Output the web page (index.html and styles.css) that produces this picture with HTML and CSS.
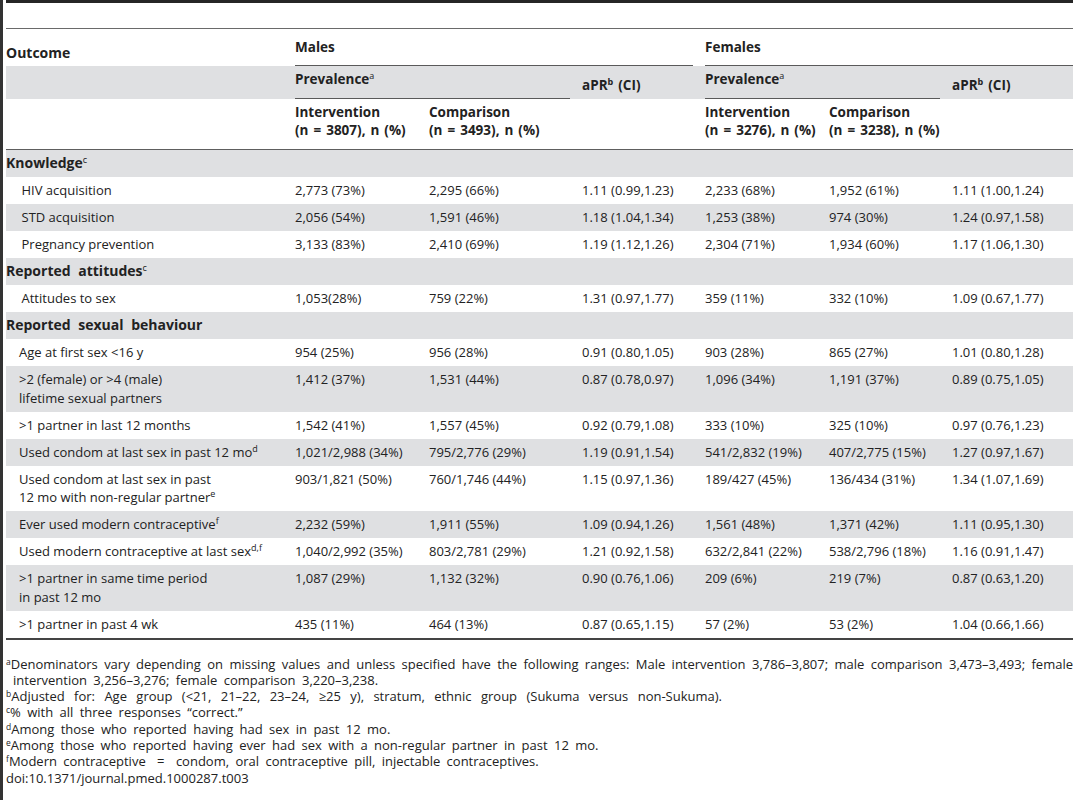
FILE: index.html
```html
<!DOCTYPE html>
<html lang="en">
  <head>
    <meta charset="UTF-8" />
    <meta name="viewport" content="width=device-width, initial-scale=1.0" />
    <title>Table 3</title>
    <link rel="stylesheet" href="styles.css">
  </head>

  <body>
    <div class="pagina">
      <div class="barra-topo"></div>

      <table class="tabela">
        <colgroup>
          <col class="c-outcome">
          <col class="c-int">
          <col class="c-comp">
          <col class="c-apr">
          <col class="c-int2">
          <col class="c-comp2">
          <col class="c-apr2">
        </colgroup>
        <thead>
          <tr class="linha-1">
            <th class="outcome">Outcome</th>
            <th colspan="3" class="traco">Males</th>
            <th colspan="3" class="traco-todo">Females</th>
          </tr>
          <tr class="linha-2 cinza">
            <th></th>
            <th colspan="2" class="traco">Prevalence<sup>a</sup></th>
            <th class="apr">aPR<sup class="alta">b</sup> (CI)</th>
            <th colspan="2" class="traco">Prevalence<sup>a</sup></th>
            <th class="apr">aPR<sup class="alta">b</sup> (CI)</th>
          </tr>
          <tr class="linha-3">
            <th></th>
            <th>Intervention<br>(n = 3807), n (%)</th>
            <th>Comparison<br>(n = 3493), n (%)</th>
            <th></th>
            <th>Intervention<br>(n = 3276), n (%)</th>
            <th>Comparison<br>(n = 3238), n (%)</th>
            <th></th>
          </tr>
        </thead>
        <tbody>
          <tr class="secao"><td colspan="7">Knowledge<sup>c</sup></td></tr>
          <tr>
            <td class="item largo">HIV acquisition</td>
            <td>2,773 (73%)</td><td>2,295 (66%)</td><td>1.11 (0.99,1.23)</td>
            <td>2,233 (68%)</td><td>1,952 (61%)</td><td>1.11 (1.00,1.24)</td>
          </tr>
          <tr>
            <td class="item largo">STD acquisition</td>
            <td>2,056 (54%)</td><td>1,591 (46%)</td><td>1.18 (1.04,1.34)</td>
            <td>1,253 (38%)</td><td>974 (30%)</td><td>1.24 (0.97,1.58)</td>
          </tr>
          <tr>
            <td class="item largo">Pregnancy prevention</td>
            <td>3,133 (83%)</td><td>2,410 (69%)</td><td>1.19 (1.12,1.26)</td>
            <td>2,304 (71%)</td><td>1,934 (60%)</td><td>1.17 (1.06,1.30)</td>
          </tr>
          <tr class="secao"><td colspan="7">Reported attitudes<sup>c</sup></td></tr>
          <tr>
            <td class="item largo">Attitudes to sex</td>
            <td>1,053(28%)</td><td>759 (22%)</td><td>1.31 (0.97,1.77)</td>
            <td>359 (11%)</td><td>332 (10%)</td><td>1.09 (0.67,1.77)</td>
          </tr>
          <tr class="secao"><td colspan="7">Reported sexual behaviour</td></tr>
          <tr>
            <td class="item">Age at first sex &lt;16 y</td>
            <td>954 (25%)</td><td>956 (28%)</td><td>0.91 (0.80,1.05)</td>
            <td>903 (28%)</td><td>865 (27%)</td><td>1.01 (0.80,1.28)</td>
          </tr>
          <tr>
            <td class="item">&gt;2 (female) or &gt;4 (male)<br>lifetime sexual partners</td>
            <td>1,412 (37%)</td><td>1,531 (44%)</td><td>0.87 (0.78,0.97)</td>
            <td>1,096 (34%)</td><td>1,191 (37%)</td><td>0.89 (0.75,1.05)</td>
          </tr>
          <tr>
            <td class="item">&gt;1 partner in last 12 months</td>
            <td>1,542 (41%)</td><td>1,557 (45%)</td><td>0.92 (0.79,1.08)</td>
            <td>333 (10%)</td><td>325 (10%)</td><td>0.97 (0.76,1.23)</td>
          </tr>
          <tr>
            <td class="item">Used condom at last sex in past 12 mo<sup>d</sup></td>
            <td>1,021/2,988 (34%)</td><td>795/2,776 (29%)</td><td>1.19 (0.91,1.54)</td>
            <td>541/2,832 (19%)</td><td>407/2,775 (15%)</td><td>1.27 (0.97,1.67)</td>
          </tr>
          <tr>
            <td class="item">Used condom at last sex in past<br>12 mo with non-regular partner<sup>e</sup></td>
            <td>903/1,821 (50%)</td><td>760/1,746 (44%)</td><td>1.15 (0.97,1.36)</td>
            <td>189/427 (45%)</td><td>136/434 (31%)</td><td>1.34 (1.07,1.69)</td>
          </tr>
          <tr>
            <td class="item">Ever used modern contraceptive<sup>f</sup></td>
            <td>2,232 (59%)</td><td>1,911 (55%)</td><td>1.09 (0.94,1.26)</td>
            <td>1,561 (48%)</td><td>1,371 (42%)</td><td>1.11 (0.95,1.30)</td>
          </tr>
          <tr>
            <td class="item">Used modern contraceptive at last sex<sup>d,f</sup></td>
            <td>1,040/2,992 (35%)</td><td>803/2,781 (29%)</td><td>1.21 (0.92,1.58)</td>
            <td>632/2,841 (22%)</td><td>538/2,796 (18%)</td><td>1.16 (0.91,1.47)</td>
          </tr>
          <tr>
            <td class="item">&gt;1 partner in same time period<br>in past 12 mo</td>
            <td>1,087 (29%)</td><td>1,132 (32%)</td><td>0.90 (0.76,1.06)</td>
            <td>209 (6%)</td><td>219 (7%)</td><td>0.87 (0.63,1.20)</td>
          </tr>
          <tr>
            <td class="item">&gt;1 partner in past 4 wk</td>
            <td>435 (11%)</td><td>464 (13%)</td><td>0.87 (0.65,1.15)</td>
            <td>57 (2%)</td><td>53 (2%)</td><td>1.04 (0.66,1.66)</td>
          </tr>
        </tbody>
      </table>

      <div class="notas">
        <p class="just"><sup>a</sup>Denominators vary depending on missing values and unless specified have the following ranges: Male intervention 3,786–3,807; male comparison 3,473–3,493; female intervention 3,256–3,276; female comparison 3,220–3,238.</p>
        <p class="largo"><sup>b</sup>Adjusted for: Age group (&lt;21, 21–22, 23–24, ≥25 y), stratum, ethnic group (Sukuma versus non-Sukuma).</p>
        <p><sup>c</sup>% with all three responses “correct.”</p>
        <p><sup>d</sup>Among those who reported having had sex in past 12 mo.</p>
        <p><sup>e</sup>Among those who reported having ever had sex with a non-regular partner in past 12 mo.</p>
        <p><sup>f</sup>Modern contraceptive <span class="igual">=</span> condom, oral contraceptive pill, injectable contraceptives.</p>
        <p>doi:10.1371/journal.pmed.1000287.t003</p>
      </div>
    </div>
  </body>
</html>
```

FILE: styles.css
```css
  body {
    margin: 0;
    background: #fff;
    color: #222;
    font-family: "Open Sans", "DejaVu Sans", sans-serif;
    font-size: 13px;
  }
  .pagina {
    min-height: 800px;
    border-left: 3px solid #333;
    padding-left: 3px;
  }
  .barra-topo {
    height: 3px;
    background: #262626;
    margin-bottom: 25px;
  }

  .tabela {
    width: 1067px;
    table-layout: fixed;
    border-collapse: separate;
    border-spacing: 0;
    border-top: 1px solid #6a6a6a;
    border-bottom: 2px solid #444;
    line-height: 18.5px;
  }
  .c-outcome { width: 289px; }
  .c-int { width: 134px; }
  .c-comp { width: 153px; }
  .c-apr { width: 123px; }
  .c-int2 { width: 124px; }
  .c-comp2 { width: 123px; }
  .c-apr2 { width: 121px; }

  th, td {
    padding: 0;
    text-align: left;
    vertical-align: top;
    white-space: nowrap;
  }
  th {
    font-weight: bold;
    font-size: 13.5px;
    word-spacing: 1.5px;
  }
  .cinza,
  tbody tr:nth-child(odd) {
    background: #dfe0e2;
  }

  .linha-1 th {
    padding: 9px 0 9.5px;
  }
  .linha-1 .outcome {
    padding: 15px 0 3.5px;
    font-size: 14px;
  }
  .linha-2 th {
    padding: 3.75px 0 10.75px;
  }
  .linha-2 .apr {
    padding: 9.75px 0 4.75px;
  }
  .linha-3 th {
    padding: 3.75px 0 9.25px;
    border-bottom: 1px solid #5e5e5e;
  }
  .traco {
    background: linear-gradient(#5a5a5a, #5a5a5a) left bottom / calc(100% - 12px) 1px no-repeat;
  }
  .traco-todo {
    background: linear-gradient(#5a5a5a, #5a5a5a) left bottom / 100% 1px no-repeat;
  }

  td {
    padding: 4.25px 0;
  }
  .secao td {
    font-weight: bold;
    font-size: 14px;
    word-spacing: 4px;
  }
  .item {
    padding-left: 13px;
  }
  .item.largo {
    padding-left: 15.5px;
  }

  sup {
    font-size: 9px;
    line-height: 0;
    vertical-align: 5px;
    font-weight: normal;
  }
  .alta {
    font-weight: bold;
  }

  .notas {
    margin-top: 16px;
    line-height: 16.3px;
    word-spacing: 3px;
  }
  .notas p {
    margin: 0;
    padding-left: 7px;
    text-indent: -7px;
  }
  .notas .just {
    text-align: justify;
  }
  .notas .largo {
    word-spacing: 6px;
  }
  .notas .igual {
    margin: 0 5px;
  }
  .notas sup {
    font-size: 8.5px;
    vertical-align: 4px;
  }
```
